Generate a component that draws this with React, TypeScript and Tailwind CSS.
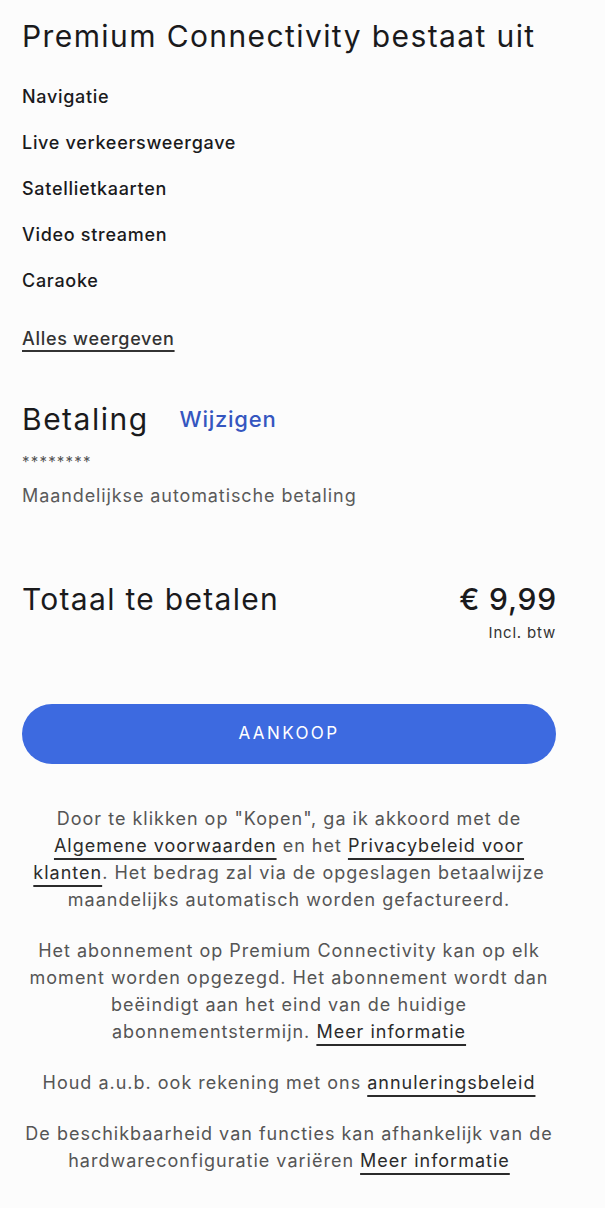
import React from 'react';

const features = ['Navigatie', 'Live verkeersweergave', 'Satellietkaarten', 'Video streamen', 'Caraoke'];

function Link({ children }: { children: React.ReactNode }) {
  return (
    <a href="#" className="text-[#2b2b2b] underline decoration-[1.5px] underline-offset-[6px]">
      {children}
    </a>
  );
}

export default function App() {
  return (
    <div className="min-h-[1208px] bg-[#fcfcfc] font-['Inter',sans-serif] text-[#1a1a1c]">
      <div className="ml-[22px] w-[534px] pt-[17px] pb-[30px]">
        <h1 className="whitespace-nowrap text-[30px] leading-[38px] font-normal tracking-[1.4px]">Premium Connectivity bestaat uit</h1>

        <ul className="mt-[28px] flex flex-col gap-[18px]">
          {features.map((f) => (
            <li key={f} className="text-[18px] leading-[28px] font-medium tracking-[0.7px]">
              {f}
            </li>
          ))}
        </ul>

        <div className="mt-[30px] text-[18px] leading-[28px] font-medium tracking-[0.7px]">
          <a href="#" className="text-[#333] underline decoration-[1.5px] underline-offset-[5px]">Alles weergeven</a>
        </div>

        {/* Betaling */}
        <div className="mt-[47px] flex items-baseline gap-[31px]">
          <h2 className="text-[30px] leading-[38px] font-normal tracking-[1.5px]">Betaling</h2>
          <a href="#" className="-translate-y-[3px] text-[22px] font-medium tracking-[0.75px] text-[#3556c0]">Wijzigen</a>
        </div>
        <div className="mt-[13px] text-[15px] leading-[20px] tracking-[1.2px] text-[#555]">********</div>
        <div className="mt-[12px] text-[18px] leading-[24px] tracking-[0.9px] text-[#5a5a5a]">Maandelijkse automatische betaling</div>

        {/* Totaal */}
        <div className="mt-[72px] flex items-start justify-between">
          <h2 className="text-[30px] leading-[38px] font-normal tracking-[1.3px]">Totaal te betalen</h2>
          <div className="flex flex-col items-end">
            <span className="-mr-[1px] text-[30px] leading-[38px] font-medium tracking-[0.8px]">€ 9,99</span>
            <span className="mt-[6px] text-[15px] leading-[18px] tracking-[0.8px] text-[#333]">Incl. btw</span>
          </div>
        </div>

        <button className="mt-[62px] h-[60px] w-full rounded-full bg-[#3d6ae0] text-[17px] font-normal tracking-[2.4px] text-white">
          AANKOOP
        </button>

        <div className="-mx-[10px] mt-[41px] flex flex-col gap-[24px] text-center text-[18px] leading-[27px] tracking-[1px] text-[#555]">
          <p>
            Door te klikken op "Kopen", ga ik akkoord met de
            <br />
            <Link>Algemene voorwaarden</Link> en het <Link>Privacybeleid voor</Link>
            <br />
            <Link>klanten</Link>. Het bedrag zal via de opgeslagen betaalwijze
            <br />
            maandelijks automatisch worden gefactureerd.
          </p>
          <p>
            Het abonnement op Premium Connectivity kan op elk
            <br />
            moment worden opgezegd. Het abonnement wordt dan
            <br />
            beëindigt aan het eind van de huidige
            <br />
            abonnementstermijn. <Link>Meer informatie</Link>
          </p>
          <p>
            Houd a.u.b. ook rekening met ons <Link>annuleringsbeleid</Link>
          </p>
          <p>
            De beschikbaarheid van functies kan afhankelijk van de
            <br />
            hardwareconfiguratie variëren <Link>Meer informatie</Link>
          </p>
        </div>
      </div>
    </div>
  );
}
